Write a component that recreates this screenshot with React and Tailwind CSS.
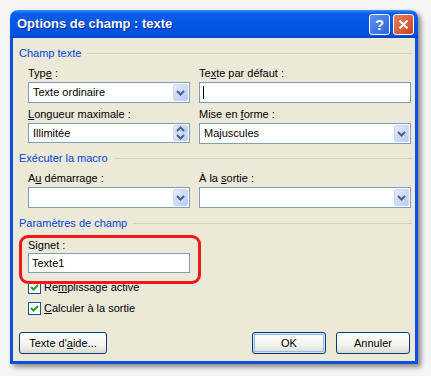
import React from 'react'

function Chevron({ up }) {
  return (
    <svg width="9" height="6" viewBox="0 0 9 6" aria-hidden="true">
      <path
        d={up ? 'M1 5 L4.5 1.5 L8 5' : 'M1 1 L4.5 4.5 L8 1'}
        fill="none"
        stroke="#4d6185"
        strokeWidth="2"
      />
    </svg>
  )
}

function ArrowButton({ up, className = '' }) {
  return (
    <div
      className={`flex w-[15px] items-center justify-center rounded-[2px] border border-[#c7d6fb] bg-[linear-gradient(135deg,#e3ebfe,#b7cbf7)] ${className}`}
    >
      <Chevron up={up} />
    </div>
  )
}

function Combo({ value }) {
  return (
    <div className="flex h-[21px] items-stretch border border-[#7f9db9] bg-white p-px">
      <span className="flex flex-1 items-center pl-[3px]">{value}</span>
      <ArrowButton />
    </div>
  )
}

function Spin({ value }) {
  return (
    <div className="flex h-[20px] items-stretch border border-[#7f9db9] bg-white p-px">
      <span className="flex flex-1 items-center pl-[3px]">{value}</span>
      <div className="flex w-[15px] flex-col">
        <ArrowButton up className="h-[9px]" />
        <ArrowButton className="h-[9px]" />
      </div>
    </div>
  )
}

function Section({ title }) {
  return (
    <div className="flex h-[16px] items-center pl-[6px] pr-[3px]">
      <span className="text-[#0046d5]">{title}</span>
      <div className="ml-[6px] h-px flex-1 bg-[#d0d0bf]" />
    </div>
  )
}

function Label({ children }) {
  return <div className="h-[16px] leading-[16px]">{children}</div>
}

function Check({ children }) {
  return (
    <div className="flex h-[13px] items-center gap-[3px] pl-[15px]">
      <div className="flex size-[13px] items-center justify-center border border-[#1c5180] bg-white">
        <svg width="9" height="9" viewBox="0 0 9 9" aria-hidden="true">
          <path d="M1 4 L3.5 6.5 L8 2" fill="none" stroke="#21a121" strokeWidth="2" />
        </svg>
      </div>
      <span>{children}</span>
    </div>
  )
}

function Button({ children, isDefault, className = '' }) {
  return (
    <div
      className={`flex h-[22px] items-center justify-center rounded-[3px] border border-[#003c74] bg-[linear-gradient(to_bottom,#ffffff,#f3f3ee_60%,#dcdbd0)] ${
        isDefault ? 'shadow-[inset_0_0_0_1px_#cee7ff,inset_0_0_0_2px_#98b8ea]' : ''
      } ${className}`}
    >
      {children}
    </div>
  )
}

export default function App() {
  return (
    <div className="h-[376px] w-[431px] bg-[#f5f5f5] pl-[10px] pt-[10px] font-['Liberation_Sans',Arial,sans-serif] text-[11px] text-black">
      <div className="w-[408px] shadow-[3px_3px_5px_rgba(0,0,0,0.45)] rounded-t-[8px]">
        <div className="flex h-[28px] items-center justify-between rounded-t-[8px] bg-[linear-gradient(to_bottom,#3d8ff9_0%,#0a5fe9_12%,#0055e5_50%,#0052e0_88%,#0043c4_100%)] pl-[7px] pr-[4px]">
          <span className="text-[13px] font-bold text-white [text-shadow:1px_1px_0_#0a2a8f]">
            Options de champ : texte
          </span>
          <div className="flex gap-[3px]">
            <div className="flex size-[21px] items-center justify-center rounded-[3px] border border-white bg-[linear-gradient(135deg,#5b93f5,#2e63d8)] text-[15px] font-bold leading-none text-white">
              ?
            </div>
            <div className="flex size-[21px] items-center justify-center rounded-[3px] border border-white bg-[linear-gradient(135deg,#e8805e,#d2411c)]">
              <svg width="11" height="11" viewBox="0 0 11 11" aria-hidden="true">
                <path d="M1.5 1.5 L9.5 9.5 M9.5 1.5 L1.5 9.5" stroke="#fff" strokeWidth="2.2" />
              </svg>
            </div>
          </div>
        </div>

        <div className="relative border-x-[3px] border-b-[3px] border-[#0a4fe0] bg-[#ece9d8] pb-[7px] pt-[7px]">
          <Section title="Champ texte" />

          <div className="mt-[4px] grid grid-cols-[162px_212px] gap-x-[9px] pl-[15px]">
            <div>
              <Label>
                Typ<u>e</u> :
              </Label>
              <div className="mt-px">
                <Combo value="Texte ordinaire" />
              </div>
              <div className="mt-[3px]">
                <Label>
                  <u>L</u>ongueur maximale :
                </Label>
              </div>
              <div className="mt-px">
                <Spin value="Illimitée" />
              </div>
            </div>
            <div>
              <Label>
                Te<u>x</u>te par défaut :
              </Label>
              <div className="mt-px flex h-[21px] items-center border border-[#7f9db9] bg-white pl-[3px]">
                <span className="h-[13px] w-px bg-black" />
              </div>
              <div className="mt-[3px]">
                <Label>
                  Mise en <u>f</u>orme :
                </Label>
              </div>
              <div className="mt-px">
                <Combo value="Majuscules" />
              </div>
            </div>
          </div>

          <div className="mt-[6px]">
            <Section title="Exécuter la macro" />
          </div>
          <div className="mt-[4px] grid grid-cols-[162px_212px] gap-x-[9px] pl-[15px]">
            <div>
              <Label>
                A<u>u</u> démarrage :
              </Label>
              <div className="mt-px">
                <Combo value="" />
              </div>
            </div>
            <div>
              <Label>
                À la <u>s</u>ortie :
              </Label>
              <div className="mt-px">
                <Combo value="" />
              </div>
            </div>
          </div>

          <div className="mt-[7px]">
            <Section title="Paramètres de champ" />
          </div>
          <div className="mt-[6px] w-[177px] pl-[15px]">
            <Label>Signet :</Label>
            <div className="flex h-[20px] items-center border border-[#7f9db9] bg-white pl-[3px]">
              Texte1
            </div>
          </div>

          <div className="mt-[8px]">
            <Check>
              Re<u>m</u>plissage activé
            </Check>
          </div>
          <div className="mt-[8px]">
            <Check>
              <u>C</u>alculer à la sortie
            </Check>
          </div>

          <div className="mt-[17px] flex items-center pl-[6px] pr-[5px]">
            <Button className="w-[88px]">
              Texte d'<u>a</u>ide...
            </Button>
            <div className="flex-1" />
            <Button isDefault className="w-[74px]">
              OK
            </Button>
            <Button className="ml-[10px] w-[74px]">Annuler</Button>
          </div>

          <div className="pointer-events-none absolute left-[6px] top-[197px] h-[49px] w-[182px] rounded-[9px] border-[3px] border-[#f01818]" />
        </div>
      </div>
    </div>
  )
}
